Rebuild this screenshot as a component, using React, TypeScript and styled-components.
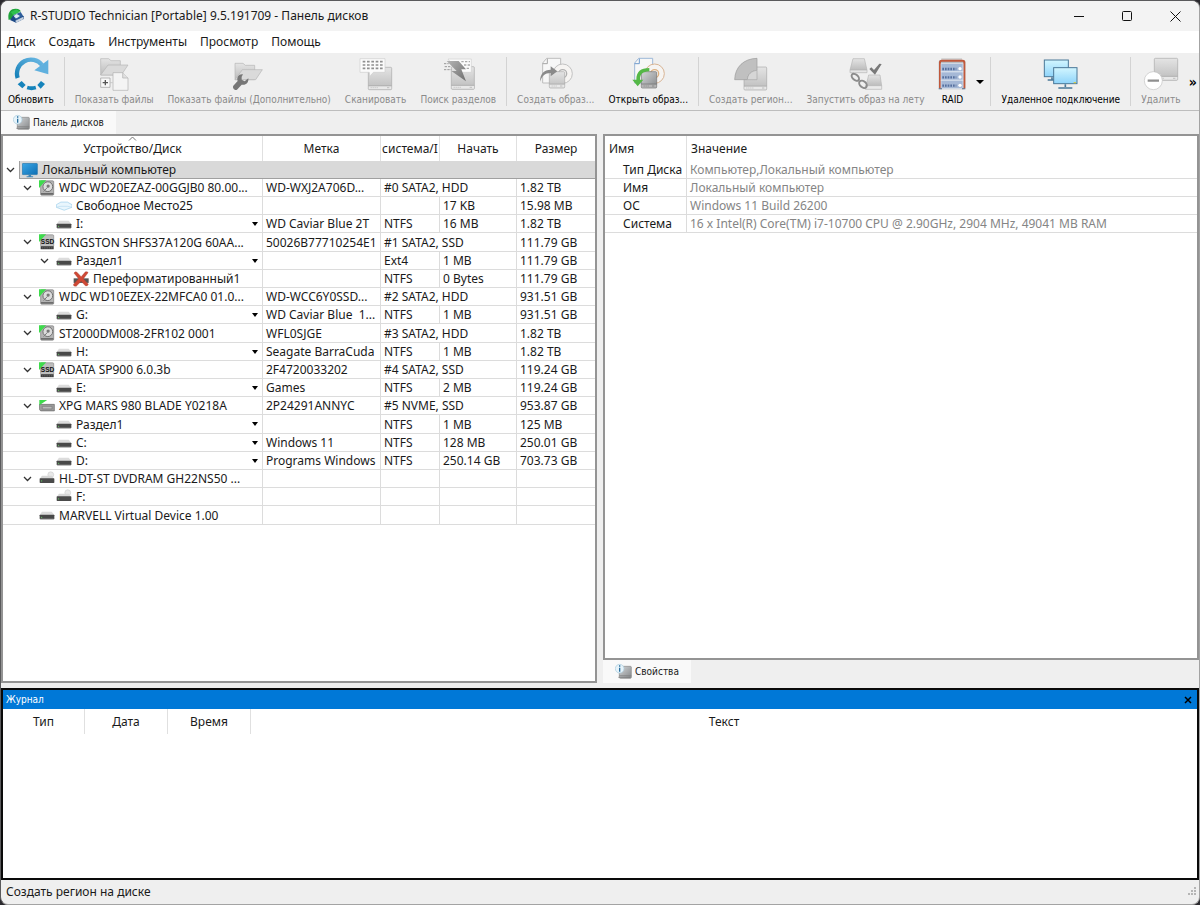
import React from "react";
import styled, { createGlobalStyle } from "styled-components";

const UI_FONT = '"Noto Sans", "Open Sans", sans-serif';
const SMALL_FONT = '"DejaVu Sans Condensed", "Noto Sans", sans-serif';

const GlobalStyle = createGlobalStyle`
  *, *::before, *::after { box-sizing: border-box; }
  body { margin: 0; background: #2b2a2e; }
  button { font: inherit; color: inherit; background: none; border: 0; padding: 0; margin: 0; }
  svg { display: block; flex: none; }
`;

const Window = styled.div`
  display: flex;
  flex-direction: column;
  min-height: 100vh;
  border: 1px solid #5a5a5c;
  border-right-color: #a3a3a3;
  border-bottom-color: #a3a3a3;
  border-radius: 8px;
  overflow: hidden;
  background: #efefef;
  color: #1a1a1a;
  font: 12px/18px ${UI_FONT};
`;

const TitleBar = styled.header`
  display: flex;
  align-items: center;
  height: 30px;
  padding-left: 7px;
  background: #f3f3f3;
`;

const Title = styled.h1`
  flex: 1;
  margin: 0 0 0 6px;
  font-size: 12px;
  font-weight: 400;
`;

const CaptionButton = styled.button`
  display: flex;
  align-items: center;
  justify-content: center;
  width: 48px;
  height: 30px;
`;

const MenuBar = styled.nav`
  display: flex;
  align-items: center;
  gap: 13px;
  height: 22px;
  padding-left: 6px;
  background: #fff;
`;

const ToolBar = styled.div`
  display: flex;
  align-items: stretch;
  height: 58px;
  padding: 4px 2px 4px 0;
  border-bottom: 1px solid #bdbdbd;
  font: 10px/14px ${SMALL_FONT};
  white-space: nowrap;
`;

const ToolItem = styled.button<{ $off?: boolean; $tight?: boolean }>`
  display: flex;
  flex-direction: column;
  align-items: center;
  gap: 2px;
  padding: 0 ${(p) => (p.$tight ? 3 : 7)}px;
  color: ${(p) => (p.$off ? "#8a8a8a" : "#000")};
`;

const ToolSeparator = styled.span`
  width: 1px;
  margin: 0 3px;
  background: #d3d3d3;
`;

const ToolArrow = styled.button`
  display: flex;
  align-items: center;
  padding: 0 3px;
`;

const MoreButton = styled.button`
  margin-left: auto;
  font-size: 14px;
  font-weight: 700;
  color: #000;
`;

const Tab = styled.button`
  display: flex;
  align-items: center;
  gap: 3px;
  height: 23px;
  padding: 0 12px;
  background: #f9f9f9;
  font: 10px/14px ${SMALL_FONT};
  color: #1a1a1a;
`;

const Workspace = styled.main`
  display: grid;
  grid-template-columns: 1fr 1fr;
  gap: 6px;
  flex: 1;
`;

const Column = styled.div`
  display: flex;
  flex-direction: column;
  align-items: flex-start;
  min-width: 0;
`;

const Pane = styled.section`
  flex: 1;
  width: 100%;
  border: 2px solid #949494;
  background: #fff;
`;

const Grid = styled.table`
  width: 100%;
  table-layout: fixed;
  border-collapse: separate;
  border-spacing: 0;
`;

const Head = styled.th<{ $left?: boolean }>`
  position: relative;
  height: 25px;
  padding: ${(p) => (p.$left ? "0 4px" : "0")};
  border-right: 1px solid #e0e0e0;
  font-weight: 400;
  text-align: ${(p) => (p.$left ? "left" : "center")};
  white-space: nowrap;
  &:last-child { border-right: 0; }
`;

const SortMark = styled.span`
  position: absolute;
  top: 0;
  left: 50%;
  margin-left: -5px;
`;

const Row = styled.tr`
  height: 18px;
  &:nth-child(5n) { height: 19px; }
`;

const Cell = styled.td<{ $muted?: boolean }>`
  padding: 0 0 0 3px;
  border-right: 1px solid #dcdcdc;
  border-bottom: 1px solid #dcdcdc;
  line-height: 17px;
  white-space: pre;
  color: ${(p) => (p.$muted ? "#858585" : "inherit")};
  &:last-child { border-right: 0; }
`;

const NameCell = styled(Cell)`
  padding: 0;
`;

const Branch = styled.div<{ $level: number }>`
  display: flex;
  align-items: center;
  height: 17px;
  padding-left: ${(p) => p.$level * 17}px;
`;

const Expander = styled.button`
  display: flex;
  justify-content: center;
  flex: none;
  width: 15px;
`;

const NodeLabel = styled.span`
  flex: 1;
  margin-left: 4px;
`;

const DropButton = styled.button`
  padding: 0 4px 0 2px;
`;

const RootCell = styled.td`
  padding: 0;
  line-height: 17px;
`;

const RootItem = styled.div`
  display: flex;
  align-items: center;
  flex: 1;
  height: 18px;
  margin-left: 1px;
  padding-left: 2px;
  background: #d9d9d9;
  border-left: 1px solid #a0a0a0;
  border-bottom: 1px solid #a0a0a0;
`;

const PropName = styled.th`
  padding: 0 0 0 18px;
  border-right: 1px solid #dcdcdc;
  border-bottom: 1px solid #dcdcdc;
  font-weight: 400;
  line-height: 17px;
  text-align: left;
  white-space: nowrap;
`;

const Journal = styled.section`
  min-height: 192px;
  margin-top: 5px;
  border: 2px solid #0a0a0a;
  background: #fff;
`;

const JournalTitle = styled.div`
  display: flex;
  align-items: center;
  justify-content: space-between;
  height: 19px;
  padding: 0 5px 0 3px;
  background: #0078d7;
  color: #fff;
  font: 10px/14px ${SMALL_FONT};
`;

const JournalHeading = styled.h2`
  margin: 0;
  font-size: 10px;
  font-weight: 400;
`;

const StatusBar = styled.footer`
  display: flex;
  align-items: center;
  justify-content: space-between;
  height: 24px;
  padding: 0 1px 0 5px;
`;

const HiddenDefs = styled.svg`
  position: absolute;
`;

const Defs = () => (
  <HiddenDefs width="0" height="0" aria-hidden="true">
    <defs>
      <linearGradient id="grey" x1="0" y1="0" x2="0" y2="1">
        <stop offset="0" stopColor="#e4e4e4" />
        <stop offset="1" stopColor="#bcbcbc" />
      </linearGradient>
      <linearGradient id="steel" x1="0" y1="0" x2="1" y2="1">
        <stop offset="0" stopColor="#d4d6d8" />
        <stop offset="1" stopColor="#85888a" />
      </linearGradient>
      <linearGradient id="bolt" x1="0" y1="0" x2="1" y2="1">
        <stop offset="0" stopColor="#b4b4b4" />
        <stop offset="1" stopColor="#6e6e6e" />
      </linearGradient>
      <linearGradient id="blue" x1="0" y1="1" x2="1" y2="0">
        <stop offset="0" stopColor="#1580b8" />
        <stop offset="1" stopColor="#6ab8e4" />
      </linearGradient>
      <linearGradient id="screen" x1="0" y1="0" x2="1" y2="1">
        <stop offset="0" stopColor="#3ba7e6" />
        <stop offset="1" stopColor="#0f6fb4" />
      </linearGradient>
      <linearGradient id="glass" x1="0" y1="0" x2="0" y2="1">
        <stop offset="0" stopColor="#d2f6ff" />
        <stop offset="1" stopColor="#8fd4fa" />
      </linearGradient>
    </defs>
  </HiddenDefs>
);

const ToolSvg = ({ children }: { children: React.ReactNode }) => (
  <svg width="36" height="34" viewBox="0 0 108 102" aria-hidden="true">
    {children}
  </svg>
);

const GreyDisk = ({ x, y, w, h, dark }: { x: number; y: number; w: number; h: number; dark?: boolean }) => (
  <g stroke={dark ? "#6f6f6f" : "#a9a9a9"} strokeWidth="2">
    <rect x={x} y={y} width={w} height={h} rx="3" fill={dark ? "url(#steel)" : "url(#grey)"} />
    <path d={`M${x + 1} ${y + h - 6}h${w - 2}`} stroke={dark ? "#b5b5b5" : "#e8e8e8"} strokeWidth="9" />
    <path d={`M${x} ${y + h - 12}h${w}`} />
    <path d={`M${x + 7} ${y + h - 6}h${w / 3}`} strokeDasharray="3 3" />
    <path d={`M${x + w - 14} ${y + h - 6}h7`} />
  </g>
);

const OpenFolder = () => (
  <g stroke="#b5b5b5" strokeWidth="2" strokeLinejoin="round">
    <path d="M14 54V5h24l7 6h28v43z" fill="url(#grey)" />
    <path d="M14 54L36 24h60L76 54z" fill="#dadada" />
  </g>
);

const RefreshIcon = () => (
  <ToolSvg>
    <path d="M14 63A42 42 0 0 1 87 24" fill="none" stroke="url(#blue)" strokeWidth="13" />
    <path d="M106 8v44L64 40z" fill="#5fb0de" />
    <path d="M14 82l12-10 12 12-10 10zM44 86q11 4 23 0l3 11q-14 5-29 0zM84 72l12 9-13 14-10-11z" fill="#1583bb" />
  </ToolSvg>
);

const ShowFilesIcon = () => (
  <ToolSvg>
    <OpenFolder />
    <path d="M51 47h29l16 16v37H51z" fill="#f4f4f4" stroke="#b0b0b0" strokeWidth="2" />
    <path d="M80 47v16h16" fill="#e0e0e0" stroke="#b0b0b0" strokeWidth="2" />
    <path d="M14 63h28v28H14z" fill="#f8f8f8" stroke="#9a9a9a" strokeWidth="2" />
    <path d="M20 77h16M28 69v16" stroke="#555" strokeWidth="4" />
    <path d="M44 77h6" stroke="#9a9a9a" strokeWidth="2" strokeDasharray="3 2" />
  </ToolSvg>
);

const ShowFilesExtraIcon = () => (
  <ToolSvg>
    <g transform="translate(-2 14)"><OpenFolder /></g>
    <path d="M36 52c-12-2-20 8-16 20L7 86c-4 6 4 16 11 12l14-15c12 3 22-6 20-19l-11 9-9-5 0-9z" fill="#777" />
  </ToolSvg>
);

const ScanIcon = () => (
  <ToolSvg>
    <GreyDisk x={31} y={31} w={70} h={67} />
    <path d="M6 5h75v41H46l-10 12-2-12H6z" fill="#fbfbfb" stroke="#cfcfcf" strokeWidth="2" />
    <path d="M14 14h60M14 24h60M14 34h60" stroke="#8f8f8f" strokeWidth="5" strokeDasharray="8 5" />
  </ToolSvg>
);

const FindPartitionsIcon = () => (
  <ToolSvg>
    <GreyDisk x={34} y={29} w={69} h={68} />
    <path d="M24 6h70v40H54z" fill="#fbfbfb" stroke="#d0d0d0" strokeWidth="2" />
    <path d="M64 14h26M72 24h18M80 34h10" stroke="#aaa" strokeWidth="4" strokeDasharray="7 4" />
    <path d="M12 20h14M14 29h18M12 38h22" stroke="#999" strokeWidth="3" strokeDasharray="7 3" />
    <path d="M20 12h36l22 25H64l14 36L34 42h16z" fill="url(#bolt)" />
  </ToolSvg>
);

const ImageIcon = ({ open }: { open?: boolean }) => (
  <ToolSvg>
    <path d="M26 4h42v74H14V18z" fill="#f7f7f7" stroke={open ? "#9db8d8" : "#bdbdbd"} strokeWidth="3" />
    <path d="M14 20h14V5" fill="none" stroke={open ? "#6f9bcc" : "#a5a5a5"} strokeWidth="3" />
    <circle cx="74" cy="50" r="29" fill="#f6f4f2" stroke={open ? "#d8b494" : "#c2c2c2"} strokeWidth="3" />
    <circle cx="74" cy="50" r="12" fill="none" stroke={open ? "#dcb080" : "#b0b0b0"} strokeWidth="4" />
    <GreyDisk x={34} y={44} w={46} h={49} dark={open} />
    {open ? (
      <path d="M58 33C32 33 19 44 19 68H7l16 20 17-20H30c0-17 8-24 28-25z" fill="#55b847" />
    ) : (
      <path d="M6 74C6 50 18 38 38 38V28l20 15-20 15V48C20 48 12 58 6 74z" fill="#8a8a8a" />
    )}
  </ToolSvg>
);

const RegionIcon = () => (
  <ToolSvg>
    <GreyDisk x={33} y={30} w={68} h={69} />
    <path d="M5 68C6 30 32 5 72 4v36c-17 2-28 12-29 28z" fill="#c0c0c0" stroke="#9a9a9a" strokeWidth="2" />
    <path d="M43 68c1-16 12-26 29-28v28z" fill="#d6d6d6" stroke="#a8a8a8" strokeWidth="2" />
  </ToolSvg>
);

const MountIcon = () => (
  <ToolSvg>
    <path d="M15 5h34l8 34H6z" fill="url(#grey)" stroke="#b5b5b5" strokeWidth="2" />
    <path d="M6 39h51v8H6z" fill="#e6e6e6" stroke="#b5b5b5" strokeWidth="2" />
    <path d="M62 54h34l5 32H54z" fill="url(#grey)" stroke="#b5b5b5" strokeWidth="2" />
    <path d="M52 86h49v11H52z" fill="#eaeaea" stroke="#b5b5b5" strokeWidth="2" />
    <g fill="none" stroke="#8c8c8c" strokeWidth="6">
      <ellipse cx="22" cy="61" rx="13" ry="8" transform="rotate(42 22 61)" />
      <ellipse cx="45" cy="82" rx="13" ry="9" transform="rotate(42 45 82)" />
    </g>
    <path d="M64 36l6-5 8 8 16-19 7 1-20 32z" fill="#7a7a7a" />
  </ToolSvg>
);

const RaidIcon = () => (
  <ToolSvg>
    <path d="M22 4h62v8H22z" fill="#ccc" />
    <rect x="14" y="9" width="80" height="88" rx="6" fill="#b9bcc2" />
    <path d="M18 94V16q0-5 5-5h63q5 0 5 5v78" fill="none" stroke="#c0583c" strokeWidth="6" />
    {[20, 45, 70].map((y) => (
      <g key={y}>
        <rect x="21" y={y} width="66" height="24" fill="#a5b8d6" stroke="#dfe7f2" strokeWidth="2" />
        <path d={`M25 ${y + 16}h42`} stroke="#56709f" strokeWidth="7" strokeDasharray="5 3" />
        <circle cx="78" cy={y + 15} r="5" fill="#fff" />
      </g>
    ))}
    <path d="M14 94h10v3H14zM84 94h10v3H84z" fill="#5a6a85" />
  </ToolSvg>
);

const RemoteIcon = () => (
  <ToolSvg>
    <g fill="url(#glass)" stroke="#4a7898" strokeWidth="3">
      <rect x="4" y="9" width="72" height="50" />
      <rect x="32" y="32" width="70" height="48" />
    </g>
    <path d="M27 61v7M14 69h18M67 82v8M46 93h42" stroke="#4a7898" strokeWidth="5" />
    <path d="M92 77h7" stroke="#d6c84a" strokeWidth="4" />
  </ToolSvg>
);

const DeleteIcon = () => (
  <ToolSvg>
    <GreyDisk x={34} y={4} w={70} h={66} />
    <circle cx="31" cy="71" r="27" fill="#fff" stroke="#c2c2c2" strokeWidth="2" />
    <path d="M14 71h34" stroke="#8f8f8f" strokeWidth="7" />
  </ToolSvg>
);

const AppIcon = () => (
  <svg width="16" height="16" viewBox="0 0 48 48" aria-hidden="true">
    <path d="M2 36C-2 16 6 1 24 2c9 0 14 4 14 9l-8-1C16 9 14 20 17 30z" fill="#1fa33a" />
    <path d="M8 12L26 4l10 8-20 10z" fill="#2fc24e" />
    <path d="M16 22l22-10 9 14-22 10z" fill="#2f5f9c" />
    <path d="M14 26l12-8 10 6-10 7z" fill="#dfeaf5" />
    <path d="M6 36l18 8 23-11V23L25 35 16 22z" fill="#1d4a86" />
    <path d="M22 38l24-12v8L24 44z" fill="#c6d2e0" />
  </svg>
);

const PanelIcon = () => (
  <svg width="17" height="17" viewBox="0 0 51 51" aria-hidden="true">
    <rect x="13" y="10" width="36" height="36" rx="3" fill="url(#steel)" stroke="#8a8a8a" strokeWidth="2" />
    <path d="M13 38h36" stroke="#7d7d7d" strokeWidth="2" />
    <path d="M10 43h36" stroke="#777" strokeWidth="2" />
    <circle cx="14" cy="17" r="13" fill="#e6f3fa" stroke="#a9cbdc" strokeWidth="2" />
    <path d="M14 14v12M14 7v4" stroke="#2b6f9e" strokeWidth="4" />
  </svg>
);

type IconKind = "hdd" | "ssd" | "nvme" | "volume" | "free" | "deleted" | "optical" | "computer";

const nodeDrawings: Record<IconKind, React.ReactNode> = {
  computer: (
    <>
      <rect x="1" y="4" width="46" height="34" rx="2" fill="url(#screen)" stroke="#2174ac" strokeWidth="2" />
      <path d="M20 38h8v5h6v3H14v-3h6z" fill="#3d86b8" />
    </>
  ),
  hdd: (
    <>
      <rect x="5" y="2" width="40" height="44" rx="3" fill="#b4b4b4" stroke="#7a7a7a" strokeWidth="2" />
      <circle cx="27" cy="20" r="15" fill="#dcdcdc" stroke="#6f6f6f" strokeWidth="3" />
      <circle cx="28" cy="18" r="5" fill="#777" />
      <path d="M14 35l12-13" stroke="#7c7c7c" strokeWidth="3" />
      <path d="M6 42h38" stroke="#6a6a6a" strokeWidth="5" />
      <path d="M0 0h22L0 24z" fill="#3edb4c" />
    </>
  ),
  ssd: (
    <>
      <rect x="5" y="2" width="40" height="36" rx="3" fill="#bdbdbd" stroke="#858585" strokeWidth="2" />
      <path d="M5 37h40v9H5z" fill="#3c3c3c" />
      <path d="M9 42h32" stroke="#888" strokeWidth="2" strokeDasharray="4 3" />
      <path d="M0 0h22L0 24z" fill="#3edb4c" />
      <text x="26" y="29" textAnchor="middle" fontFamily="Liberation Sans" fontWeight="700" fontSize="20" fill="#111">SSD</text>
    </>
  ),
  nvme: (
    <>
      <path d="M1 19h46v20H5q-4-3-4-8z" fill="#9c9c9c" stroke="#666" strokeWidth="2" />
      <path d="M10 25h30v8H10z" fill="#b9b9b9" stroke="#777" strokeWidth="2" />
      <path d="M1 6h24L1 22z" fill="#3edb4c" />
    </>
  ),
  volume: (
    <>
      <path d="M9 14h30l8 10H2z" fill="#dcdcdc" />
      <rect x="2" y="23" width="45" height="14" rx="2" fill="#484848" />
      <circle cx="8" cy="31" r="2" fill="#62c262" />
      <path d="M4 36h41" stroke="#8d8d8d" strokeWidth="2" />
    </>
  ),
  free: (
    <>
      <path d="M1 20l14-8h20l14 8v8l-24 9L1 28z" fill="#e9f6fd" stroke="#9accea" strokeWidth="2" />
      <path d="M1 28l14-3h20l14 3" fill="none" stroke="#b5daf0" strokeWidth="2" />
    </>
  ),
  deleted: (
    <>
      <path d="M2 22h46v14H2z" fill="#555" />
      <path d="M3 6q4-6 9-3l13 14L38 2q8-2 8 3L32 23l15 17q-2 7-9 5L25 31 10 46q-9 2-9-5l16-18z" fill="#cf4936" stroke="#a33a2c" strokeWidth="1" />
    </>
  ),
  optical: (
    <>
      <circle cx="36" cy="11" r="9" fill="#e8e8e8" stroke="#cfcfcf" strokeWidth="2" />
      <path d="M9 14h30l8 10H2z" fill="#d6d6d6" />
      <rect x="2" y="22" width="45" height="14" rx="2" fill="#4a4a4a" />
      <circle cx="8" cy="30" r="2" fill="#62c262" />
    </>
  ),
};

const NodeIcon = ({ kind }: { kind: IconKind }) => (
  <svg width="16" height="16" viewBox="0 0 49 48" aria-hidden="true">
    {nodeDrawings[kind]}
  </svg>
);

const Chevron = () => (
  <svg width="9" height="6" viewBox="0 0 9 6" aria-hidden="true">
    <path d="M1 1l3.500 3.500L8 1" fill="none" stroke="#333" strokeWidth="1.300" />
  </svg>
);

const DownArrow = ({ wide }: { wide?: boolean }) => (
  <svg width={wide ? 8 : 6} height="4" viewBox="0 0 6 4" preserveAspectRatio="none" aria-hidden="true">
    <path d="M0 0h6L3 4z" fill="#000" />
  </svg>
);

type Node = {
  level: number;
  open?: boolean;
  kind: IconKind;
  name: string;
  drop?: boolean;
  label?: string;
  fs?: string;
  start?: string;
  size?: string;
};

const nodes: Node[] = [
  { level: 1, open: true, kind: "hdd", name: "WDC WD20EZAZ-00GGJB0 80.00...", label: "WD-WXJ2A706D...", fs: "#0 SATA2, HDD", size: "1.82 TB" },
  { level: 2, kind: "free", name: "Свободное Место25", start: "17 KB", size: "15.98 MB" },
  { level: 2, kind: "volume", name: "I:", drop: true, label: "WD Caviar Blue 2T", fs: "NTFS", start: "16 MB", size: "1.82 TB" },
  { level: 1, open: true, kind: "ssd", name: "KINGSTON SHFS37A120G 60AA...", label: "50026B77710254E1", fs: "#1 SATA2, SSD", size: "111.79 GB" },
  { level: 2, open: true, kind: "volume", name: "Раздел1", drop: true, fs: "Ext4", start: "1 MB", size: "111.79 GB" },
  { level: 3, kind: "deleted", name: "Переформатированный1", fs: "NTFS", start: "0 Bytes", size: "111.79 GB" },
  { level: 1, open: true, kind: "hdd", name: "WDC WD10EZEX-22MFCA0 01.0...", label: "WD-WCC6Y0SSD...", fs: "#2 SATA2, HDD", size: "931.51 GB" },
  { level: 2, kind: "volume", name: "G:", drop: true, label: "WD Caviar Blue  1...", fs: "NTFS", start: "1 MB", size: "931.51 GB" },
  { level: 1, open: true, kind: "hdd", name: "ST2000DM008-2FR102 0001", label: "WFL0SJGE", fs: "#3 SATA2, HDD", size: "1.82 TB" },
  { level: 2, kind: "volume", name: "H:", drop: true, label: "Seagate BarraCuda", fs: "NTFS", start: "1 MB", size: "1.82 TB" },
  { level: 1, open: true, kind: "ssd", name: "ADATA SP900 6.0.3b", label: "2F4720033202", fs: "#4 SATA2, SSD", size: "119.24 GB" },
  { level: 2, kind: "volume", name: "E:", drop: true, label: "Games", fs: "NTFS", start: "2 MB", size: "119.24 GB" },
  { level: 1, open: true, kind: "nvme", name: "XPG MARS 980 BLADE Y0218A", label: "2P24291ANNYC", fs: "#5 NVME, SSD", size: "953.87 GB" },
  { level: 2, kind: "volume", name: "Раздел1", drop: true, fs: "NTFS", start: "1 MB", size: "125 MB" },
  { level: 2, kind: "volume", name: "C:", drop: true, label: "Windows 11", fs: "NTFS", start: "128 MB", size: "250.01 GB" },
  { level: 2, kind: "volume", name: "D:", drop: true, label: "Programs Windows", fs: "NTFS", start: "250.14 GB", size: "703.73 GB" },
  { level: 1, open: true, kind: "optical", name: "HL-DT-ST DVDRAM GH22NS50 ..." },
  { level: 2, kind: "optical", name: "F:" },
  { level: 1, kind: "volume", name: "MARVELL Virtual Device 1.00" },
];

const properties = [
  ["Тип Диска", "Компьютер,Локальный компьютер"],
  ["Имя", "Локальный компьютер"],
  ["ОС", "Windows 11 Build 26200"],
  ["Система", "16 x Intel(R) Core(TM) i7-10700 CPU @ 2.90GHz, 2904 MHz, 49041 MB RAM"],
];

const IconSlot = styled.span`
  flex: none;
  margin-left: 4px;
`;

const Col = styled.col<{ $w?: number }>`
  width: ${(p) => (p.$w ? `${p.$w}px` : "auto")};
`;

const DeviceRow = ({ node }: { node: Node }) => {
  const spansStart = node.fs?.startsWith("#");
  return (
    <Row>
      <NameCell>
        <Branch $level={node.level}>
          {node.open ? (
            <Expander aria-label="Свернуть"><Chevron /></Expander>
          ) : (
            <Expander as="span" />
          )}
          <IconSlot><NodeIcon kind={node.kind} /></IconSlot>
          <NodeLabel>{node.name}</NodeLabel>
          {node.drop && <DropButton aria-label="Тома"><DownArrow /></DropButton>}
        </Branch>
      </NameCell>
      <Cell>{node.label}</Cell>
      <Cell colSpan={spansStart ? 2 : 1}>{node.fs}</Cell>
      {!spansStart && <Cell>{node.start}</Cell>}
      <Cell>{node.size}</Cell>
    </Row>
  );
};

type ToolProps = { icon: React.ReactNode; label: string; off?: boolean; tight?: boolean };

const Tool = ({ icon, label, off, tight }: ToolProps) => (
  <ToolItem $off={off} $tight={tight} disabled={off}>
    {icon}
    {label}
  </ToolItem>
);

export default function App() {
  return (
    <>
      <GlobalStyle />
      <Defs />
      <Window>
        <TitleBar>
          <AppIcon />
          <Title>R-STUDIO Technician [Portable] 9.5.191709 - Панель дисков</Title>
          <CaptionButton aria-label="Свернуть">
            <svg width="11" height="11"><path d="M0 5.500h10" stroke="#111" /></svg>
          </CaptionButton>
          <CaptionButton aria-label="Развернуть">
            <svg width="11" height="11"><rect x=".5" y=".5" width="9" height="9" rx="1" fill="none" stroke="#111" /></svg>
          </CaptionButton>
          <CaptionButton aria-label="Закрыть">
            <svg width="11" height="11"><path d="M.5.5l10 10M10.500.5l-10 10" stroke="#111" /></svg>
          </CaptionButton>
        </TitleBar>
        <MenuBar>
          {["Диск", "Создать", "Инструменты", "Просмотр", "Помощь"].map((m) => (
            <button key={m}>{m}</button>
          ))}
        </MenuBar>
        <ToolBar role="toolbar">
          <Tool icon={<RefreshIcon />} label="Обновить" />
          <ToolSeparator />
          <Tool off icon={<ShowFilesIcon />} label="Показать файлы" />
          <Tool off icon={<ShowFilesExtraIcon />} label="Показать файлы (Дополнительно)" />
          <Tool off icon={<ScanIcon />} label="Сканировать" />
          <Tool off icon={<FindPartitionsIcon />} label="Поиск разделов" />
          <ToolSeparator />
          <Tool off icon={<ImageIcon />} label="Создать образ..." />
          <Tool icon={<ImageIcon open />} label="Открыть образ..." />
          <ToolSeparator />
          <Tool off icon={<RegionIcon />} label="Создать регион..." />
          <Tool off icon={<MountIcon />} label="Запустить образ на лету" />
          <Tool tight icon={<RaidIcon />} label="RAID" />
          <ToolArrow aria-label="Виды RAID"><DownArrow wide /></ToolArrow>
          <ToolSeparator />
          <Tool icon={<RemoteIcon />} label="Удаленное подключение" />
          <ToolSeparator />
          <Tool off icon={<DeleteIcon />} label="Удалить" />
          <MoreButton>»</MoreButton>
        </ToolBar>
        <div role="tablist">
          <Tab role="tab"><PanelIcon />Панель дисков</Tab>
        </div>
        <Workspace>
          <Column>
            <Pane>
              <Grid>
                <colgroup>
                  <Col /><Col $w={118} /><Col $w={59} /><Col $w={77} /><Col $w={78} />
                </colgroup>
                <thead>
                  <tr>
                    <Head>
                      <SortMark>
                        <svg width="9" height="6" viewBox="0 0 9 6"><path d="M1 4.500L4.500 1 8 4.500" fill="none" stroke="#777" /></svg>
                      </SortMark>
                      Устройство/Диск
                    </Head>
                    <Head>Метка</Head>
                    <Head>система/I</Head>
                    <Head>Начать</Head>
                    <Head>Размер</Head>
                  </tr>
                </thead>
                <tbody>
                  <Row>
                    <RootCell colSpan={5}>
                      <Branch $level={0}>
                        <Expander aria-label="Свернуть"><Chevron /></Expander>
                        <RootItem>
                          <NodeIcon kind="computer" />
                          <NodeLabel>Локальный компьютер</NodeLabel>
                        </RootItem>
                      </Branch>
                    </RootCell>
                  </Row>
                  {nodes.map((n, i) => <DeviceRow key={i} node={n} />)}
                </tbody>
              </Grid>
            </Pane>
          </Column>
          <Column>
            <Pane>
              <Grid>
                <colgroup><Col $w={82} /><Col /></colgroup>
                <thead>
                  <tr>
                    <Head $left>Имя</Head>
                    <Head $left>Значение</Head>
                  </tr>
                </thead>
                <tbody>
                  {properties.map(([name, value]) => (
                    <Row key={name}>
                      <PropName scope="row">{name}</PropName>
                      <Cell $muted>{value}</Cell>
                    </Row>
                  ))}
                </tbody>
              </Grid>
            </Pane>
            <Tab role="tab"><PanelIcon />Свойства</Tab>
          </Column>
        </Workspace>
        <Journal>
          <JournalTitle>
            <JournalHeading>Журнал</JournalHeading>
            <button aria-label="Закрыть журнал">
              <svg width="8" height="8"><path d="M1 1l6 6M7 1L1 7" stroke="#000" strokeWidth="1.500" /></svg>
            </button>
          </JournalTitle>
          <Grid>
            <colgroup><Col $w={82} /><Col $w={83} /><Col $w={83} /><Col /></colgroup>
            <thead>
              <tr>
                <Head>Тип</Head>
                <Head>Дата</Head>
                <Head>Время</Head>
                <Head>Текст</Head>
              </tr>
            </thead>
          </Grid>
        </Journal>
        <StatusBar>
          Создать регион на диске
          <svg width="10" height="10" fill="#b5b5b5" aria-hidden="true">
            <path d="M6 0h2v2H6zM3 3h2v2H3zM6 3h2v2H6zM0 6h2v2H0zM3 6h2v2H3zM6 6h2v2H6z" />
          </svg>
        </StatusBar>
      </Window>
    </>
  );
}
